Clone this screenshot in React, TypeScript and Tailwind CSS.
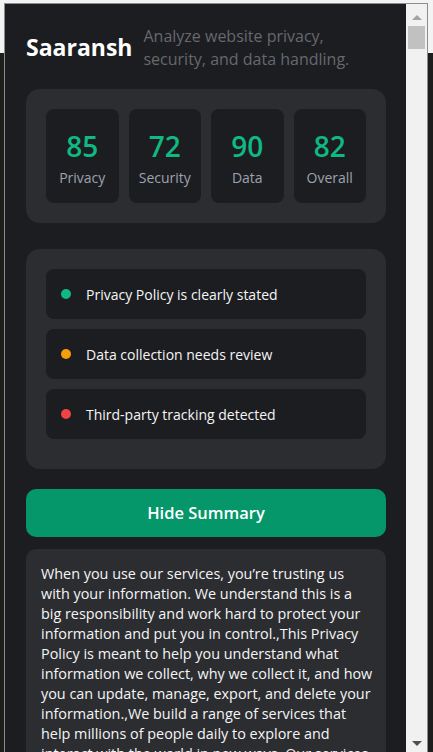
const font = { fontFamily: '"Open Sans", "Noto Sans", Arial, sans-serif' };

const scores = [
  { value: 85, label: "Privacy" },
  { value: 72, label: "Security" },
  { value: 90, label: "Data" },
  { value: 82, label: "Overall" },
];

const findings = [
  { text: "Privacy Policy is clearly stated", dot: "bg-[#10b981]" },
  { text: "Data collection needs review", dot: "bg-[#f59e0b]" },
  { text: "Third-party tracking detected", dot: "bg-[#ef4444]" },
];

const summary =
  "When you use our services, you\u2019re trusting us with your information. We understand this is a big responsibility and work hard to protect your information and put you in control.,This Privacy Policy is meant to help you understand what information we collect, why we collect it, and how you can update, manage, export, and delete your information.,We build a range of services that help millions of people daily to explore and interact with the world in new ways. Our services include: Google apps, sites, and devices, like Search, YouTube, and Google Home.";

function Scrollbar() {
  return (
    <div className="flex w-[21px] shrink-0 flex-col items-center bg-[#f1f1f1]">
      <div className="mt-[11px] h-0 w-0 border-x-[5px] border-b-[5px] border-x-transparent border-b-[#a3a3a3]" />
      <div className="mt-[6px] h-[23px] w-[17px] bg-[#c1c1c1]" />
      <div className="mt-auto mb-[6px] h-0 w-0 border-x-[5px] border-t-[5px] border-x-transparent border-t-[#505050]" />
    </div>
  );
}

export default function App() {
  return (
    <div
      className="h-[752px] w-[433px] overflow-hidden bg-[linear-gradient(to_bottom,#f3f3f3_0,#f3f3f3_53px,#1d1e1b_53px)] pt-[3px] pl-1"
      style={font}
    >
      <div className="flex h-[749px] w-[424px] border-x border-t border-[#8c8c8c]">
        <div className="w-[401px] shrink-0 overflow-hidden bg-[#1c1d21] pr-[20px] pl-[21px]">
          <header className="flex items-start gap-[11px] pt-[21px]">
            <h1 className="pt-[6px] text-[23px] leading-[32px] font-bold text-white">
              Saaransh
            </h1>
            <p className="text-[16px] leading-[23px] text-[#66686e]">
              Analyze website privacy, security, and data handling.
            </p>
          </header>

          <section className="mt-[18px] grid grid-cols-4 gap-[10px] rounded-[14px] bg-[#2c2d31] p-5">
            {scores.map((s) => (
              <div
                key={s.label}
                className="flex h-[94px] flex-col items-center justify-center rounded-[8px] bg-[#1c1d21] pt-[4px]"
              >
                <span className="text-[28px] leading-[36px] font-semibold text-[#10b981]">
                  {s.value}
                </span>
                <span className="mt-[4px] text-[14px] leading-[20px] text-[#9ca3af]">
                  {s.label}
                </span>
              </div>
            ))}
          </section>

          <section className="mt-[26px] flex flex-col gap-[10px] rounded-[14px] bg-[#2c2d31] px-5 pt-5 pb-[30px]">
            {findings.map((f) => (
              <div
                key={f.text}
                className="flex h-[50px] items-center gap-[15px] rounded-[8px] bg-[#1c1d21] pl-[15px]"
              >
                <span className={`h-[10px] w-[10px] rounded-full ${f.dot}`} />
                <span className="text-[14px] text-[#f5f5f5]">{f.text}</span>
              </div>
            ))}
          </section>

          <button className="mt-5 h-[48px] w-full rounded-[10px] bg-[#059669] text-[16.5px] font-semibold text-white">
            Hide Summary
          </button>

          <div className="mt-3 rounded-[10px] bg-[#2c2d31] pt-[15px] pr-[12px] pb-4 pl-[15px] text-[14.4px] leading-[20px] text-[#f5f5f5]">
            {summary}
          </div>
        </div>
        <Scrollbar />
      </div>
    </div>
  );
}
